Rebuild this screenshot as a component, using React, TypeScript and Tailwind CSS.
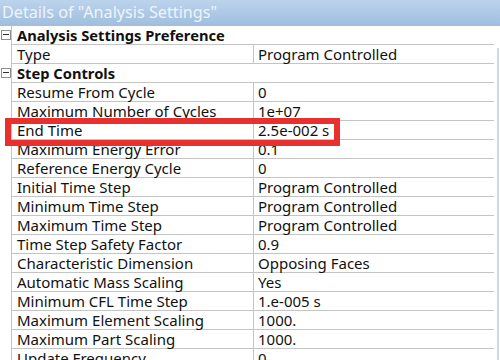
const rows: { label: string; value?: string; group?: boolean }[] = [
  { label: "Analysis Settings Preference", group: true },
  { label: "Type", value: "Program Controlled" },
  { label: "Step Controls", group: true },
  { label: "Resume From Cycle", value: "0" },
  { label: "Maximum Number of Cycles", value: "1e+07" },
  { label: "End Time", value: "2.5e-002 s" },
  { label: "Maximum Energy Error", value: "0.1" },
  { label: "Reference Energy Cycle", value: "0" },
  { label: "Initial Time Step", value: "Program Controlled" },
  { label: "Minimum Time Step", value: "Program Controlled" },
  { label: "Maximum Time Step", value: "Program Controlled" },
  { label: "Time Step Safety Factor", value: "0.9" },
  { label: "Characteristic Dimension", value: "Opposing Faces" },
  { label: "Automatic Mass Scaling", value: "Yes" },
  { label: "Minimum CFL Time Step", value: "1.e-005 s" },
  { label: "Maximum Element Scaling", value: "1000." },
  { label: "Maximum Part Scaling", value: "1000." },
  { label: "Update Frequency", value: "0" },
];

function Collapse() {
  return (
    <div className="relative mt-[4px] ml-[1px] h-[10px] w-[10px] border border-[#8f8f8f] bg-white">
      <div className="absolute left-[1px] top-[3px] h-[1px] w-[6px] bg-[#333]" />
    </div>
  );
}

export default function App() {
  return (
    <div
      className="relative h-[360px] w-[500px] overflow-hidden bg-white text-[#111]"
      style={{ fontFamily: '"Noto Sans", "Open Sans", sans-serif' }}
    >
      <div className="h-[26px] bg-gradient-to-b from-[#bcd3ec] to-[#9fbedf] pl-[2px] text-[16.2px] leading-[25px] text-[#eef4fa]">
        Details of "Analysis Settings"
      </div>
      <div className="flex">
        <div className="w-[494px]">
          {rows.map((r) => (
            <div key={r.label} className="flex h-[19px]">
              <div className="w-[11px] shrink-0">{r.group && <Collapse />}</div>
              <div className="flex flex-1 border-b border-l border-[#c4c4c4] text-[15px] leading-[18px]">
                {r.group ? (
                  <div className="pl-[5px] text-[14.7px] font-bold">{r.label}</div>
                ) : (
                  <>
                    <div className="w-[242px] shrink-0 border-r border-[#c4c4c4] pl-[5px]">{r.label}</div>
                    <div className="pl-[4px]">{r.value}</div>
                  </>
                )}
              </div>
            </div>
          ))}
        </div>
        <div className="ml-[3px] mt-[22px] h-[320px] w-[2px] bg-[#c9d9ea]" />
      </div>
      <div className="absolute left-[5px] top-[118px] h-[28px] w-[335px] border-[6px] border-[#e8302e]" />
    </div>
  );
}
